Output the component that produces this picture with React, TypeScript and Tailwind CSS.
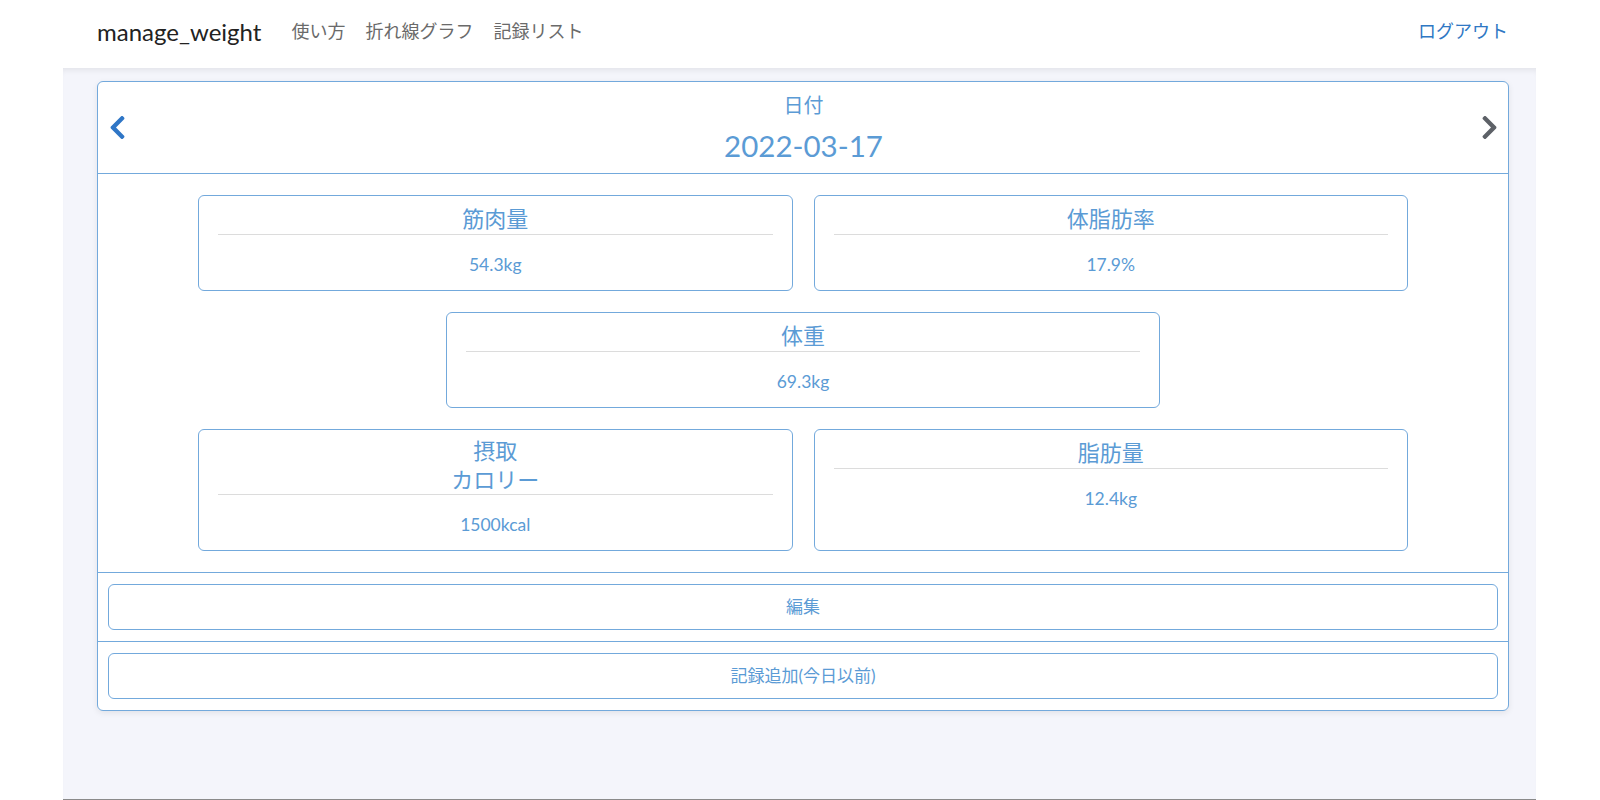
import { FC, ReactNode } from "react";
import { FaChevronLeft, FaChevronRight } from "react-icons/fa";

const font = {
  fontFamily: '"Lato", "Noto Sans CJK JP", sans-serif'
};

type MetricProps = {
  title: ReactNode;
  value: string;
  twoLine?: boolean;
  className?: string;
};

const Metric: FC<MetricProps> = ({ title, value, twoLine, className }) => {
  return (
    <div
      className={`flex flex-col rounded-[6px] border border-[#73a9dc] bg-white px-[19px] pb-[12px] text-center text-[#5b9bd5] ${twoLine ? "pt-[6px]" : "pt-[8px]"} ${className ?? ""}`}
    >
      <h5 className={`text-[22px] ${twoLine ? "leading-[29px]" : "leading-[30px]"}`}>{title}</h5>
      <div className="h-px shrink-0 bg-[#dcdcdc]" />
      <p className="pt-[16px] text-[17.5px] leading-[27px]">{value}</p>
    </div>
  );
};

const ActionButton: FC<{ label: string }> = ({ label }) => {
  return (
    <div className="px-[10px] py-[11px]">
      <button className="flex h-[46px] w-full items-center justify-center rounded-[6px] border border-[#73a9dc] bg-white text-[17px] text-[#5b9bd5]">
        {label}
      </button>
    </div>
  );
};

export default function App() {
  return (
    <div className="flex h-[800px] w-full flex-col bg-white" style={font}>
      <nav className="flex h-[68px] shrink-0 items-center pb-[5px] pl-[97px] pr-[92px]">
        <span className="mr-[20px] text-[24px] text-[#222]">manage_weight</span>
        <a className="px-[10px] text-[18px] text-[#6a6a6a]">使い方</a>
        <a className="px-[10px] text-[18px] text-[#6a6a6a]">折れ線グラフ</a>
        <a className="px-[10px] text-[18px] text-[#6a6a6a]">記録リスト</a>
        <a className="ml-auto text-[18px] text-[#2f78c4]">ログアウト</a>
      </nav>

      <main className="ml-[63px] mr-[64px] flex-1 border-b border-[#8a8a8a] bg-[#f4f5fb] pt-[13px] pl-[34px] pr-[27px] shadow-[inset_0_6px_6px_-4px_rgba(0,0,0,0.08)]">
        <div className="overflow-hidden rounded-[6px] border border-[#73a9dc] bg-white shadow-[0_2px_6px_rgba(0,0,0,0.08)]">
          <header className="flex h-[92px] items-center justify-between border-b border-[#73a9dc] pl-[6px] pr-[5px]">
            <FaChevronLeft size={27} className="text-[#2f76c6]" />
            <div className="flex flex-col items-center text-[#5b9bd5]">
              <span className="pt-[1px] text-[20px] leading-[26px]">日付</span>
              <h3 className="mt-[9px] text-[29.5px] leading-[37px]">2022-03-17</h3>
            </div>
            <FaChevronRight size={27} className="text-[#5d6167]" />
          </header>

          <section className="flex flex-col items-center gap-[21px] border-b border-[#73a9dc] py-[21px]">
            <div className="grid w-[1210px] grid-cols-2 gap-x-[21px]">
              <Metric title="筋肉量" value="54.3kg" />
              <Metric title="体脂肪率" value="17.9%" />
            </div>
            <Metric title="体重" value="69.3kg" className="w-[714px]" />
            <div className="grid w-[1210px] grid-cols-2 gap-x-[21px]">
              <Metric
                twoLine
                title={
                  <>
                    摂取
                    <br />
                    カロリー
                  </>
                }
                value="1500kcal"
              />
              <Metric title="脂肪量" value="12.4kg" />
            </div>
          </section>

          <div className="border-b border-[#73a9dc]">
            <ActionButton label="編集" />
          </div>
          <ActionButton label="記録追加(今日以前)" />
        </div>
      </main>
    </div>
  );
}
